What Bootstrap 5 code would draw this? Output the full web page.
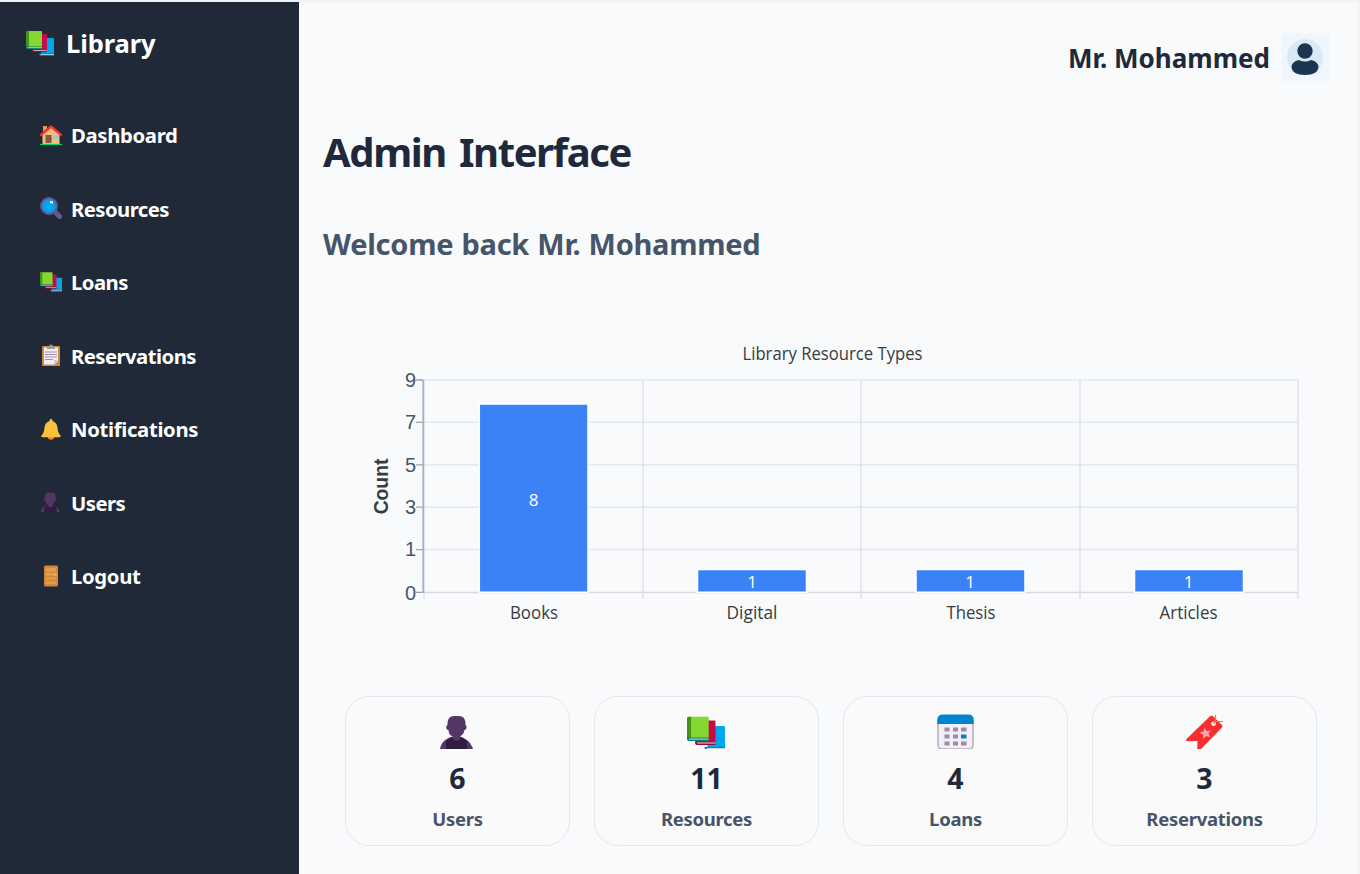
<!DOCTYPE html>
<html lang="en">
<head>
<meta charset="utf-8">
<meta name="viewport" content="width=device-width, initial-scale=1">
<title>Library</title>
<link href="https://cdn.jsdelivr.net/npm/bootstrap@5.3.0/dist/css/bootstrap.min.css" rel="stylesheet">
<style>
  body { font-family: "Noto Sans", "Open Sans", sans-serif; background: #f9fafc; color: #1e293b; height: 874px; overflow: hidden; border-top: 2px solid #f3f3f5; }
  .side { width: 299px; background: #1f2937; flex: none; }
  .brand { font-size: 25.5px; font-weight: 700; line-height: 34px; padding: 24px 0 0 26px; gap: 12px; letter-spacing: -.1px; }
  .side-nav { margin-top: 38px; }
  .side-nav .nav-link { height: 73.5px; padding: 0 0 0 40px; gap: 9px; color: #fff; font-size: 20.3px; font-weight: 700; line-height: 28px; letter-spacing: -.54px; }
  .side-nav .nav-link.looser { letter-spacing: -.33px; }
  .side-nav .nav-link span { padding-top: 1px; }
  .side-nav svg { width: 22px; height: 22px; flex: none; }
  .main-area { border-right: 2px solid #f3f3f5; padding: 0 29px 0 24px; min-width: 0; }
  .user-name { font-size: 26px; font-weight: 700; line-height: 36px; padding-top: 2px; }
  .topbar { height: 48px; margin-top: 31px; gap: 11px; }
  .page-title { font-size: 40px; font-weight: 700; line-height: 54px; margin: 44px 0 0; letter-spacing: -1.4px; word-spacing: 4px; }
  .welcome { font-size: 29px; font-weight: 700; line-height: 40px; margin: 45px 0 0; color: #475569; letter-spacing: -.27px; word-spacing: 1px; }
  .chart { display: block; margin: 68px 0 0; width: 1006px; height: 310px; flex: none; }
  .chart text { fill: #373d3f; font-family: "Open Sans", "Noto Sans", sans-serif; font-weight: 400; font-size: 18px; }
  .chart .tick { fill: #475569; font-family: "Liberation Sans", sans-serif; font-size: 20px; }
  .chart .axis-name { font-family: "Liberation Sans", sans-serif; font-weight: 700; font-size: 19.3px; }
  .chart .val { fill: #fff; font-size: 17px; }
  .stats { margin: 54px 12px 0 22px; gap: 24px; }
  .stat { flex: 1 1 0; height: 150px; border: 1.5px solid #e2e8f0; border-radius: 24px; background: #fafafa; padding-top: 17px; }
  .stat svg { width: 40px; height: 35px; }
  .stat-num { font-size: 28.5px; font-weight: 700; line-height: 40px; margin-top: 9px; }
  .stat-label { font-size: 18.5px; font-weight: 700; line-height: 28px; margin-top: 7px; color: #475569; letter-spacing: -.3px; }
</style>
</head>
<body>
<svg width="0" height="0" class="position-absolute" aria-hidden="true">
  <symbol id="books" viewBox="0 0 28 25">
    <path d="M17 7h10a1 1 0 0 1 1 1v15H15V9a2 2 0 0 1 2-2z" fill="#00a6ed"/>
    <path d="M13 22.500h15V25H14.500a1.800 1.800 0 0 1-1.500-2z" fill="#0074ba"/><path d="M14.500 23.500H28" stroke="#e6e6e6" stroke-width=".7"/>
    <path d="M10 3h10a1 1 0 0 1 1 1v15H6V5z" fill="#ca0b4a"/>
    <path d="M6 18.500h15V21H7.500A1.700 1.700 0 0 1 6 19z" fill="#990838"/><path d="M7.500 19.500H21" stroke="#e6e6e6" stroke-width=".7"/>
    <path d="M1.500 0H15a1 1 0 0 1 1 1v15H0V1.500A1.500 1.500 0 0 1 1.500 0z" fill="#86d72f"/>
    <path d="M1.500 0H3v16H0V1.500A1.500 1.500 0 0 1 1.500 0z" fill="#44911b"/>
    <path d="M0 15.500h16V18H1.500A1.500 1.500 0 0 1 0 16.500z" fill="#008463"/><path d="M1.500 16.600H16" stroke="#e6e6e6" stroke-width=".7"/>
  </symbol>
  <symbol id="person" viewBox="0 0 33 33">
    <path d="M0 33C1 27 5 23 11 21h10c6 2 10 6 12 12z" fill="#533566"/>
    <path d="M6 33V25l6-4h9l6 4v8z" fill="#321b41"/>
    <path d="M12.500 17h8v5q-4 6-8 0z" fill="#533566"/>
    <path d="M7.500 7Q8 0 14 0h5q6 0 6.500 7v2q1.500 1 1 3t-2 2q-1 7-8.500 7T8.500 14q-2 0-2.300-2t1.300-3z" fill="#533566"/>
  </symbol>
</svg>
<div class="d-flex h-100">
  <aside class="side d-flex flex-column">
    <div class="brand d-flex align-items-center text-white"><svg width="28" height="25"><use href="#books"/></svg><span>Library</span></div>
    <nav class="side-nav nav flex-column">
      <a class="nav-link looser d-flex align-items-center" href="#"><svg viewBox="0 0 22 22"><path d="M3 2h4v6H3z" fill="#d9a05b"/><path d="M2.500 10 11 3l8.500 7v10.500h-17z" fill="#f3c07b"/><path d="M5.500 11h6v8h-6z" fill="#8c5543"/><path d="M10 15h1.200" stroke="#321b41"/><path d="M13 11.300h5v3.400h-5z" fill="#83cbff"/><path d="M.8 11 11 2.500 21.200 11" fill="none" stroke="#f92f2f" stroke-width="2.300" stroke-linecap="round" stroke-linejoin="round"/><path d="M0 20.500h22" stroke="#00d26a" stroke-width="1.200"/></svg><span>Dashboard</span></a>
      <a class="nav-link d-flex align-items-center" href="#"><svg viewBox="0 0 22 22"><path d="m14 14 5.500 5.500" stroke="#635994" stroke-width="5" stroke-linecap="round"/><circle cx="9" cy="9" r="7.800" fill="#00a6ed" stroke="#635994" stroke-width="2.200"/><path d="M10 4.300h3v2h-3z" fill="#fff"/></svg><span>Resources</span></a>
      <a class="nav-link d-flex align-items-center" href="#"><svg><use href="#books"/></svg><span>Loans</span></a>
      <a class="nav-link d-flex align-items-center" href="#"><svg viewBox="0 0 22 22"><rect x="2" y="2" width="18" height="20" rx="1" fill="#d3883e"/><path d="M4 3.500h14V17l-3.500 3.500H4z" fill="#f3eef8"/><path d="M18 16h-4v4.500z" fill="#cdc4d6"/><path d="M7 5V2.500h2Q9.500.5 11 .5t2 2h2V5z" fill="#9b9b9b"/><path d="M5 8h12M5 10.500h12M5 13h12M5 15.500h8" stroke="#9b8fa8" stroke-width="1"/></svg><span>Reservations</span></a>
      <a class="nav-link looser d-flex align-items-center" href="#"><svg viewBox="0 0 22 22"><path d="M7.500 18.500h7q-.5 3.300-3.500 3.300t-3.500-3.300z" fill="#ff822d"/><path d="M9.500 3q0-2.300 1.500-2.300T12.500 3q4.500 1.500 5 6.500.3 5.500 3 8 .9 1.800-1 1.800h-17q-1.900 0-1-1.800 2.700-2.500 3-8 .5-5 5-6.500z" fill="#f9c23c"/></svg><span>Notifications</span></a>
      <a class="nav-link d-flex align-items-center" href="#"><svg viewBox="0 0 22 22"><use href="#person" x=".5" y="1.500" width="19.500" height="19.500"/></svg><span>Users</span></a>
      <a class="nav-link looser d-flex align-items-center" href="#"><svg viewBox="0 0 22 22"><rect x="4" y=".5" width="14" height="21" rx="1.500" fill="#d3883e"/><path d="M6 3h10v3.500H6zM6 8h10v2.500H6zM6 12.500h10v2H6zM6 16.500h10v2.500H6z" fill="#e39d4b"/><path d="M14 10h3" stroke="#f9c23c" stroke-width="1.200"/></svg><span>Logout</span></a>
    </nav>
  </aside>
  <main class="main-area flex-grow-1 d-flex flex-column">
    <header class="topbar d-flex align-items-center justify-content-end"><span class="user-name">Mr. Mohammed</span><svg width="48" height="48"><path d="M0 0h48v48H0z" fill="#f0f7fc"/><circle cx="24" cy="24" r="18" fill="#daeaf5"/><ellipse cx="24" cy="18" rx="7.700" ry="7.800" fill="#1c3553"/><path d="M18 27q6 3 12 0 7.500 1.500 7.500 7.500-1 7.500-13.500 7.500T10.500 34.500Q10.500 28.500 18 27z" fill="#1c3553"/></svg></header>
    <h1 class="page-title">Admin Interface</h1>
    <h2 class="welcome">Welcome back Mr. Mohammed</h2>
    <svg class="chart" viewBox="323 332 1006 310">
      <path d="M424 380H1298M424 422.300H1298M424 464.800H1298M424 507.200H1298M424 549.600H1298" stroke="#e2e8f0" stroke-width="1.500"/>
      <path d="M643 380V599M861 380V599M1080 380V599M1298 380V599M424 592V599" stroke="#e0e2e6" stroke-width="1.500"/>
      <path d="M424 592.500H1298" stroke="#d8dadd" stroke-width="1.500"/>
      <path d="M416 380h7M416 422.300h7M416 464.800h7M416 507.200h7M416 549.600h7M416 592.300h7" stroke="#94a3b8" stroke-width="1.300"/>
      <path d="M423.300 379.500V593" stroke="#a8b4c6" stroke-width="2"/>
      <g fill="#3b82f6" stroke="#fff" stroke-width="1.500"><path d="M479.300 404H588V592.200H479.300zM697.500 569.500H806.500V592.200H697.500zM916 569.500H1025V592.200H916zM1134.500 569.500H1243.500V592.200H1134.500z"/></g>
      <text x="832.500" y="360" text-anchor="middle" textLength="180" lengthAdjust="spacingAndGlyphs">Library Resource Types</text>
      <g text-anchor="end"><text class="tick" x="416" y="387">9</text><text class="tick" x="416" y="429">7</text><text class="tick" x="416" y="472">5</text><text class="tick" x="416" y="514">3</text><text class="tick" x="416" y="556">1</text><text class="tick" x="416" y="599.500">0</text></g>
      <text class="axis-name" transform="translate(388 486.500) rotate(-90)" text-anchor="middle">Count</text>
      <g text-anchor="middle"><text x="534" y="619" textLength="48" lengthAdjust="spacingAndGlyphs">Books</text><text x="752" y="619" textLength="51" lengthAdjust="spacingAndGlyphs">Digital</text><text x="971" y="619" textLength="49" lengthAdjust="spacingAndGlyphs">Thesis</text><text x="1188.500" y="619" textLength="58" lengthAdjust="spacingAndGlyphs">Articles</text>
      <text class="val" x="533.500" y="506">8</text><text class="val" x="752" y="588">1</text><text class="val" x="970" y="588">1</text><text class="val" x="1188.500" y="588">1</text></g>
    </svg>
    <section class="stats d-flex text-center">
      <div class="stat"><svg viewBox="0 0 40 35" class="d-block mx-auto"><use href="#person" x="2" y="2" width="33" height="33"/></svg><div class="stat-num">6</div><div class="stat-label">Users</div></div>
      <div class="stat"><svg viewBox="0 0 40 35" class="d-block mx-auto"><use href="#books" x="0" y="2.500" width="38" height="34"/></svg><div class="stat-num">11</div><div class="stat-label">Resources</div></div>
      <div class="stat"><svg viewBox="0 0 40 35" class="d-block mx-auto"><path d="M2 7h35v24q0 4-4 4H6q-4 0-4-4z" fill="#f3eef8" stroke="#b4acbc" stroke-width="1.500"/><path d="M1.300 10V6q0-5.500 5.500-5.500h25.400q5.500 0 5.500 5.500v4z" fill="#0084ce"/><path d="M8.500 13.500h5v4h-5zm8.500 0h5v4h-5zm8 0h5.500v4H25zM8.500 20.500h5v4h-5zm8.500 0h5v4h-5zM8.500 27.500h5v4h-5zm8.500 0h5v4h-5zm8 0h5.500v4H25z" fill="#998ea4"/><path d="M25 20.500h5.500v4H25z" fill="#0084ce"/></svg><div class="stat-num">4</div><div class="stat-label">Loans</div></div>
      <div class="stat"><svg viewBox="0 0 40 35" class="d-block mx-auto"><path d="M1.500 25 25 2.200q1.500-1 3 0L37 11q1 1.300 0 2.500L15.500 35.500h-3.300L12.500 27l-10 .2q-2.300-.6-1-2.200z" fill="#f92f2f"/><circle cx="28.500" cy="9.700" r="2.300" fill="#fafafa"/><path d="m19.500 13.500 2.200 3.500 4.300-.6-2.600 3.200 2 3.600-4-1.200-3.200 2.700v-4l-3.700-2 4-1.300z" fill="#f9a0b4"/><path d="m28.500 9.500 2-2V1M30.500 7.500H38" fill="none" stroke="#d3883e" stroke-width="1.200"/></svg><div class="stat-num">3</div><div class="stat-label">Reservations</div></div>
    </section>
  </main>
</div>
<script src="https://cdn.jsdelivr.net/npm/bootstrap@5.3.0/dist/js/bootstrap.bundle.min.js"></script>
</body>
</html>
